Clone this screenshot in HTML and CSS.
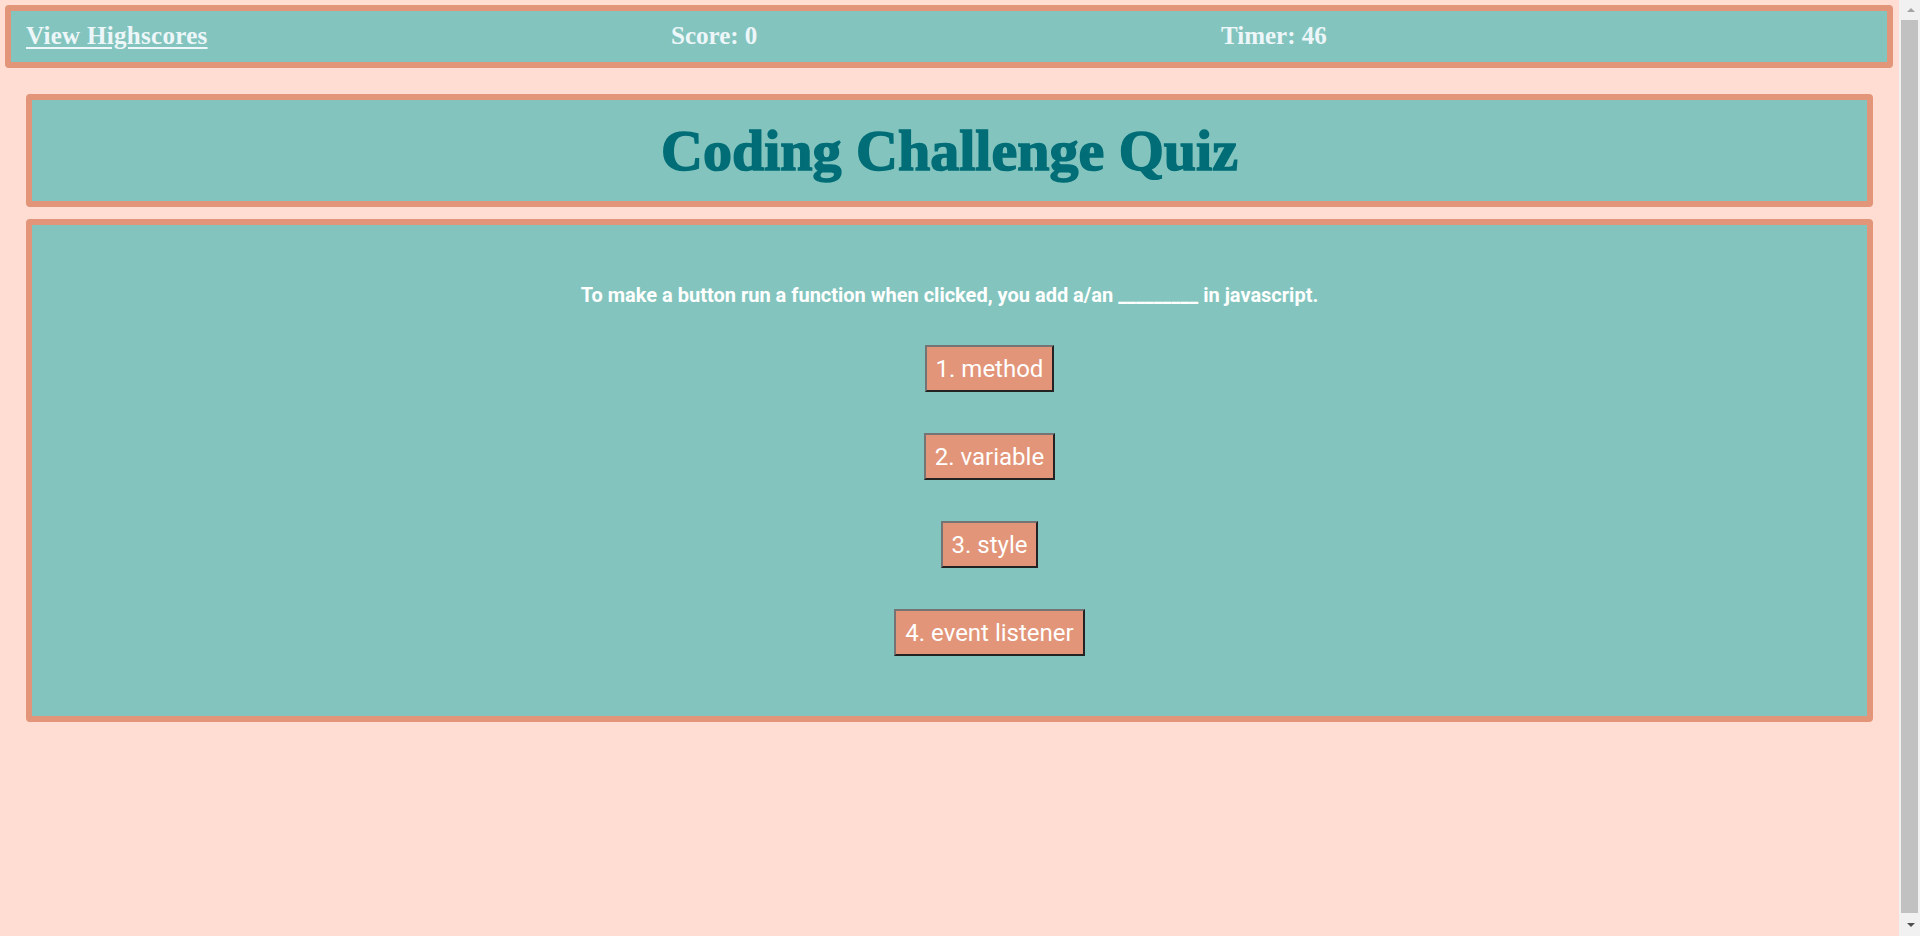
FILE: index.html
```html
<!DOCTYPE html>
<html lang="en">
<head>
<meta charset="utf-8">
<title>Coding Challenge Quiz</title>
<link rel="stylesheet" href="styles.css">
</head>
<body>
<div class="page">
  <header class="topbar">
    <a class="highscores" href="#">View Highscores</a>
    <span class="stat">Score: 0</span>
    <span class="stat">Timer: 46</span>
  </header>
  <section class="title-box">
    <h1 class="title">Coding Challenge Quiz</h1>
  </section>
  <main class="quiz-box">
    <p class="question">To make a button run a function when clicked, you add a/an _________ in javascript.</p>
    <div class="answers">
      <button class="answer">1. method</button>
      <button class="answer">2. variable</button>
      <button class="answer">3. style</button>
      <button class="answer">4. event listener</button>
    </div>
  </main>
</div>
<div class="scrollbar" aria-hidden="true">
  <span class="arrow arrow-up"></span>
  <span class="thumb"></span>
  <span class="arrow arrow-down"></span>
</div>
</body>
</html>
```

FILE: styles.css
```css
html, body {
  margin: 0;
  padding: 0;
  background: #ffddd2;
}

.page {
  box-sizing: border-box;
  padding-top: 5px;
}

.topbar {
  box-sizing: border-box;
  width: 1888px;
  height: 63px;
  margin-left: 5px;
  border: 6px solid #e29578;
  border-radius: 4px;
  background: #83c5be;
  display: grid;
  grid-template-columns: 645px 550px auto;
  align-items: center;
  padding-left: 15px;
  padding-bottom: 2px;
  font-family: "Liberation Serif", "Times New Roman", serif;
  font-weight: bold;
  font-size: 25px;
  color: #edf6f9;
}

.highscores {
  color: #edf6f9;
  text-decoration: underline;
  text-underline-offset: 3px;
  letter-spacing: 0.3px;
  justify-self: start;
}

.stat {
  justify-self: start;
}

.title-box {
  box-sizing: border-box;
  width: 1847px;
  height: 113px;
  margin: 26px 0 0 26px;
  border: 6px solid #e29578;
  border-radius: 4px;
  background: #83c5be;
  display: flex;
  align-items: center;
  justify-content: center;
}

.title {
  margin: 0;
  font-family: "Liberation Serif", "Times New Roman", serif;
  font-weight: bold;
  font-size: 58px;
  line-height: 1;
  color: #006d77;
  -webkit-text-stroke: 1.5px #006d77;
}

.quiz-box {
  box-sizing: border-box;
  width: 1847px;
  height: 503px;
  margin: 12px 0 0 26px;
  border: 6px solid #e29578;
  border-radius: 4px;
  background: #83c5be;
  display: flex;
  flex-direction: column;
  align-items: center;
  padding-top: 59px;
}

.question {
  margin: 0;
  font-family: Roboto, "Liberation Sans", sans-serif;
  font-weight: bold;
  font-size: 20px;
  line-height: 22px;
  color: #ffffff;
}

.answers {
  display: flex;
  flex-direction: column;
  align-items: center;
  gap: 41px;
  margin-top: 39px;
  padding-left: 80px;
}

.answer {
  box-sizing: border-box;
  height: 47px;
  padding: 0 9px;
  background: #e29578;
  color: #ffffff;
  font-family: Roboto, "Liberation Sans", sans-serif;
  font-size: 24px;
  line-height: 28px;
  border-style: solid;
  border-width: 2px;
  border-color: #747474 #232323 #232323 #747474;
  border-radius: 0;
  cursor: pointer;
}

/* emulated browser scrollbar */
.scrollbar {
  position: fixed;
  top: 0;
  right: 0;
  bottom: 0;
  width: 19px;
  padding-left: 2px;
  background: #f1f1f1;
  display: flex;
  flex-direction: column;
  align-items: stretch;
}

.arrow {
  height: 20px;
  display: flex;
  align-items: center;
  justify-content: center;
  flex: none;
}

.arrow::before {
  content: "";
  width: 0;
  height: 0;
  border-left: 4.5px solid transparent;
  border-right: 4.5px solid transparent;
}

.arrow-up::before {
  border-bottom: 4px solid #a3a3a3;
}

.arrow-down {
  height: 23px;
}

.arrow-down::before {
  border-top: 4px solid #505050;
}

.thumb {
  flex: 1;
  width: 17px;
  background: #c1c1c1;
}
```
